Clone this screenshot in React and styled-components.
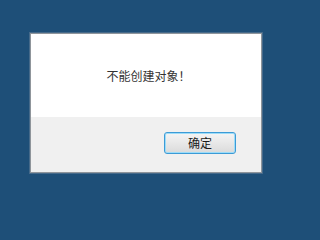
import React from "react";
import styled, { createGlobalStyle } from "styled-components";

const Global = createGlobalStyle`
  html, body { margin: 0; padding: 0; width: 300px; height: 200px; overflow: hidden; background: #1e4f78; }
  #root { width: 300px; height: 200px; }
`;

const Desktop = styled.div`
  width: 300px;
  height: 200px;
  background: #1e4f78;
  padding: 33px 0 0 30px;
  box-sizing: border-box;
`;

const Dialog = styled.div`
  width: 232px;
  height: 140px;
  box-sizing: border-box;
  border: 1px solid #8f959b;
  box-shadow: 0 0 0 1px rgba(120, 140, 160, 0.45);
  display: flex;
  flex-direction: column;
  font-family: "Noto Sans CJK SC", "Noto Sans", sans-serif;
`;

const Body = styled.div`
  height: 83px;
  background: #ffffff;
  display: flex;
  align-items: center;
  justify-content: center;
  padding: 0 0 0 5px;
  box-sizing: border-box;
`;

const Message = styled.span`
  font-size: 12px;
  color: #333333;
`;

const Footer = styled.div`
  flex: 1;
  background: #f0f0f0;
  display: flex;
  justify-content: flex-end;
  align-items: flex-start;
  padding: 15px 25px 0 0;
`;

const Button = styled.button`
  width: 72px;
  height: 22px;
  box-sizing: border-box;
  border: 1px solid #3c9bd6;
  border-radius: 3px;
  box-shadow: inset 0 0 0 1px #9ddcf8;
  background: linear-gradient(#f4f4f4, #e8e8e8 50%, #dadada);
  font-family: "Noto Sans CJK SC", "Noto Sans", sans-serif;
  font-size: 12px;
  color: #1a1a1a;
  padding: 0;
  line-height: 18px;
`;

export default function App() {
  return (
    <>
      <Global />
      <Desktop>
        <Dialog>
          <Body>
            <Message>不能创建对象！</Message>
          </Body>
          <Footer>
            <Button>确定</Button>
          </Footer>
        </Dialog>
      </Desktop>
    </>
  );
}
